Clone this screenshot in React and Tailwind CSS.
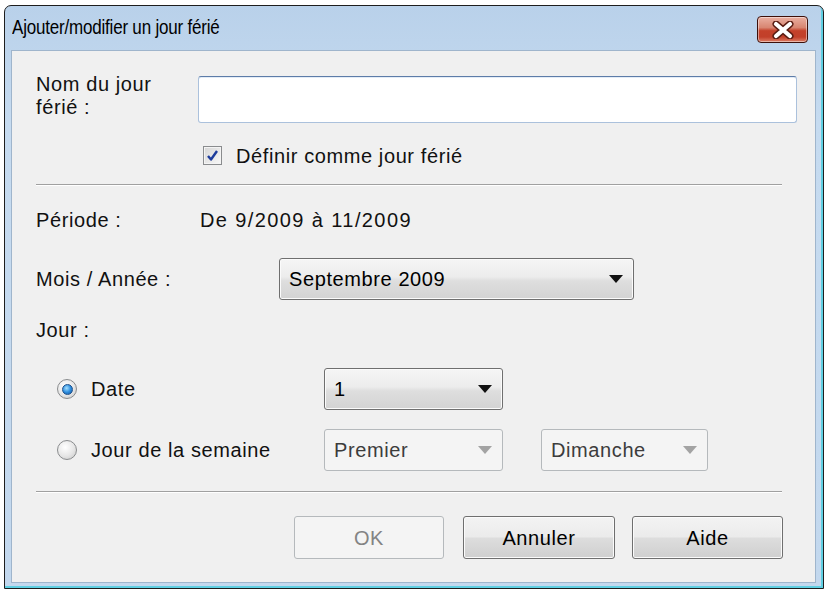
import React from 'react'

const FONT = { fontFamily: '"Liberation Sans", Arial, sans-serif' }

function Combo({ value, width, disabled = false }) {
  return (
    <div
      className={
        'relative flex h-[42px] items-center rounded-[3px] border pl-[9px] ' +
        (disabled
          ? 'border-[#b5b9bc] bg-[#f4f4f4] text-[#3c3c3c]'
          : 'border-[#6f6f6f] bg-[linear-gradient(180deg,#f5f5f5_0%,#ececec_45%,#dedede_55%,#d3d3d3_100%)] text-black shadow-[inset_0_0_0_1px_#fbfbfb]')
      }
      style={{ width }}
    >
      <span>{value}</span>
      <svg
        width="14"
        height="8"
        viewBox="0 0 14 8"
        className="absolute right-[10px] top-1/2 -translate-y-1/2"
      >
        <path d="M0 0 H14 L7 8 Z" fill={disabled ? '#a3a3a3' : '#111'} />
      </svg>
    </div>
  )
}

function Radio({ checked }) {
  return (
    <div className="flex h-[20px] w-[20px] items-center justify-center rounded-full border border-[#8a8c8e] bg-[radial-gradient(circle_at_40%_35%,#ffffff_0%,#e6e6e6_55%,#c4c4c4_100%)]">
      {checked && (
        <div className="h-[11px] w-[11px] rounded-full border border-[#1c4f8a] bg-[radial-gradient(circle_at_40%_35%,#a8e2ff_0%,#2f8fe0_50%,#10539e_100%)]" />
      )}
    </div>
  )
}

function Button({ children, disabled = false, width }) {
  return (
    <button
      type="button"
      disabled={disabled}
      className={
        'h-[43px] rounded-[3px] border text-[20px] tracking-[0.6px] ' +
        (disabled
          ? 'border-[#b5b9bc] bg-[#f4f4f4] text-[#838383]'
          : 'border-[#6f6f6f] bg-[linear-gradient(180deg,#f3f3f3_0%,#ebebeb_48%,#dddddd_52%,#cfcfcf_100%)] text-black shadow-[inset_0_0_0_1px_#fbfbfb]')
      }
      style={{ width, ...FONT }}
    >
      {children}
    </button>
  )
}

function Separator() {
  return <div className="h-[2px] w-[746px] border-t border-b border-t-[#a0a0a0] border-b-white" />
}

export default function App() {
  return (
    <div className="h-[593px] w-[826px] overflow-hidden bg-white pl-[4px] pt-[5px]">
      <div className="flex h-[584px] w-[820px] flex-col rounded-t-[7px] border border-[#1e1e1e] bg-[linear-gradient(180deg,#b9d1ea_0%,#c6dbf0_20%,#c3d8ee_100%)] shadow-[inset_-2px_-2px_0_#5fcfe2]">
        {/* title bar */}
        <div className="flex h-[44px] shrink-0 items-center justify-between pl-[7px] pr-[15px]">
          <span
            className="inline-block origin-left scale-y-[1.2] text-[17px] tracking-[-0.2px] text-black"
            style={FONT}
          >
            Ajouter/modifier un jour férié
          </span>
          <div className="mt-[3px] flex h-[27px] w-[51px] items-center justify-center rounded-[4px] border border-[#3d100a] bg-[linear-gradient(180deg,#eab0a2_0%,#d88672_42%,#c4412a_55%,#c2402a_80%,#de7e66_100%)] shadow-[inset_0_0_0_1px_rgba(255,255,255,0.45)]">
            <svg width="24" height="18" viewBox="0 0 24 18">
              <path d="M5 3 L19 15 M19 3 L5 15" stroke="#5a1c12" strokeWidth="7" strokeLinecap="round" />
              <path d="M5 3 L19 15 M19 3 L5 15" stroke="#ffffff" strokeWidth="4.2" strokeLinecap="round" />
            </svg>
          </div>
        </div>

        {/* body */}
        <div
          className="mb-[5px] ml-[6px] mr-[7px] flex-1 border border-[#9fb5cc] bg-[#f0f0f0] pl-[24px] text-[20px] tracking-[0.6px] text-[#111]"
          style={FONT}
        >
          <div className="mt-[25px] flex items-start">
            <div className="-mt-[3px] w-[162px] leading-[23px]">
              Nom du jour
              <br />
              férié :
            </div>
            <div className="h-[47px] w-[599px] rounded-[3px] border border-[#abc1dc] border-t-[#5d7ca8] bg-white shadow-[inset_0_1px_0_#e3ecf6]" />
          </div>

          <div className="ml-[167px] mt-[23px] flex h-[19px] items-center">
            <div className="flex h-[19px] w-[19px] items-center justify-center border border-[#8a8c8e] bg-[linear-gradient(135deg,#d6d6d6_0%,#f8f8f8_100%)] shadow-[inset_0_0_0_1px_#f4f4f4]">
              <svg width="13" height="13" viewBox="0 0 13 13">
                <path d="M2 7 L5 10.5 L11 2" fill="none" stroke="#1d3c9c" strokeWidth="2.4" strokeLinejoin="round" />
              </svg>
            </div>
            <span className="ml-[14px]">Définir comme jour férié</span>
          </div>

          <div className="mt-[19px]">
            <Separator />
          </div>

          <div className="mt-[23px] flex h-[22px] items-center">
            <span className="w-[164px]">Période :</span>
            <span className="tracking-[1.4px]">De 9/2009 à 11/2009</span>
          </div>

          <div className="mt-[27px] flex h-[42px] items-center">
            <span className="w-[243px]">Mois / Année :</span>
            <Combo value="Septembre 2009" width={355} />
          </div>

          <div className="mt-[19px] flex h-[22px] items-center">
            <span>Jour :</span>
          </div>

          <div className="mt-[27px] flex h-[42px] items-center">
            <div className="flex w-[288px] items-center pl-[21px]">
              <Radio checked />
              <span className="ml-[14px]">Date</span>
            </div>
            <Combo value="1" width={179} />
          </div>

          <div className="mt-[19px] flex h-[42px] items-center">
            <div className="flex w-[288px] items-center pl-[21px]">
              <Radio />
              <span className="ml-[14px]">Jour de la semaine</span>
            </div>
            <Combo value="Premier" width={179} disabled />
            <div className="ml-[38px]">
              <Combo value="Dimanche" width={167} disabled />
            </div>
          </div>

          <div className="mt-[20px]">
            <Separator />
          </div>

          <div className="ml-[258px] mt-[23px] flex">
            <Button width={150} disabled>
              OK
            </Button>
            <div className="ml-[19px]">
              <Button width={152}>Annuler</Button>
            </div>
            <div className="ml-[17px]">
              <Button width={151}>Aide</Button>
            </div>
          </div>
        </div>
      </div>
    </div>
  )
}
